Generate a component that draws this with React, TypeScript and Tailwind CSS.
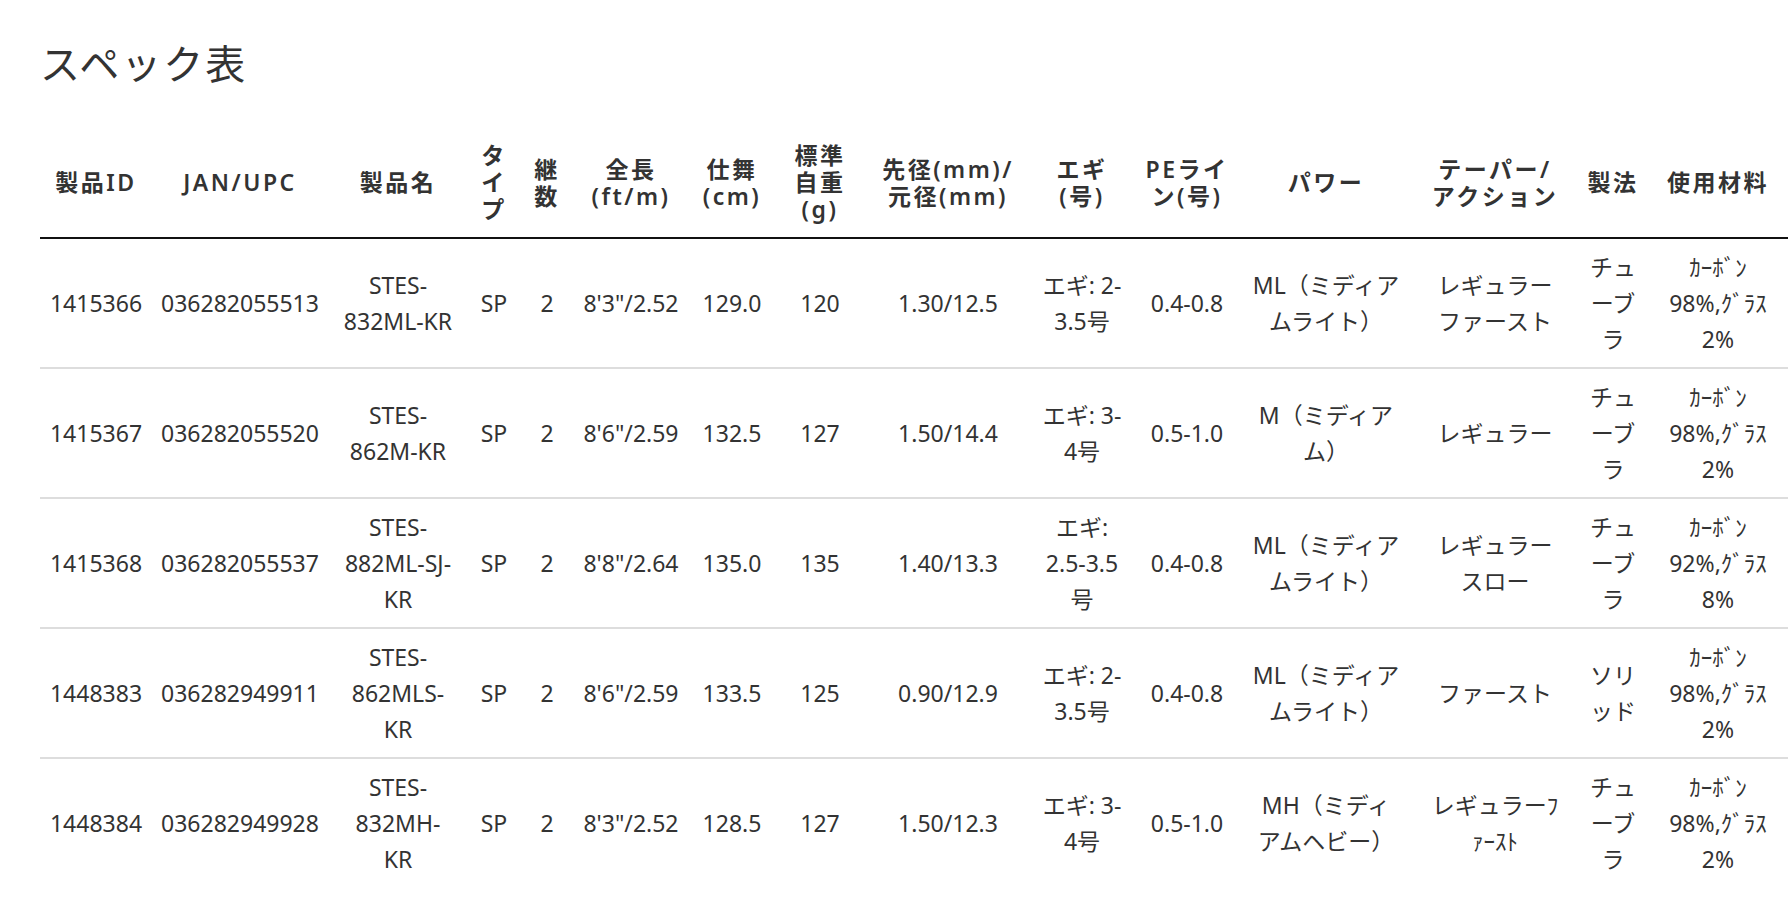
import React from "react"

const headers = [
  "製品ID",
  "JAN/UPC",
  "製品名",
  "タ\nイ\nプ",
  "継\n数",
  "全長\n(ft/m)",
  "仕舞\n(cm)",
  "標準\n自重\n(g)",
  "先径(mm)/\n元径(mm)",
  "エギ\n(号)",
  "PEライ\nン(号)",
  "パワー",
  "テーパー/\nアクション",
  "製法",
  "使用材料",
]

const widths = [
  "w-[112px]",
  "w-[176px]",
  "w-[140px]",
  "w-[52px]",
  "w-[54px]",
  "w-[114px]",
  "w-[88px]",
  "w-[88px]",
  "w-[168px]",
  "w-[100px]",
  "w-[110px]",
  "w-[168px]",
  "w-[170px]",
  "w-[66px]",
  "w-[144px]",
]

const rows = [
  [
    "1415366",
    "036282055513",
    "STES-\n832ML-KR",
    "SP",
    "2",
    "8'3\"/2.52",
    "129.0",
    "120",
    "1.30/12.5",
    "エギ: 2-\n3.5号",
    "0.4-0.8",
    "ML（ミディア\nムライト）",
    "レギュラー\nファースト",
    "チュ\nーブ\nラ",
    "ｶｰﾎﾞﾝ\n98%,ｸﾞﾗｽ\n2%",
  ],
  [
    "1415367",
    "036282055520",
    "STES-\n862M-KR",
    "SP",
    "2",
    "8'6\"/2.59",
    "132.5",
    "127",
    "1.50/14.4",
    "エギ: 3-\n4号",
    "0.5-1.0",
    "M（ミディア\nム）",
    "レギュラー",
    "チュ\nーブ\nラ",
    "ｶｰﾎﾞﾝ\n98%,ｸﾞﾗｽ\n2%",
  ],
  [
    "1415368",
    "036282055537",
    "STES-\n882ML-SJ-\nKR",
    "SP",
    "2",
    "8'8\"/2.64",
    "135.0",
    "135",
    "1.40/13.3",
    "エギ:\n2.5-3.5\n号",
    "0.4-0.8",
    "ML（ミディア\nムライト）",
    "レギュラー\nスロー",
    "チュ\nーブ\nラ",
    "ｶｰﾎﾞﾝ\n92%,ｸﾞﾗｽ\n8%",
  ],
  [
    "1448383",
    "036282949911",
    "STES-\n862MLS-\nKR",
    "SP",
    "2",
    "8'6\"/2.59",
    "133.5",
    "125",
    "0.90/12.9",
    "エギ: 2-\n3.5号",
    "0.4-0.8",
    "ML（ミディア\nムライト）",
    "ファースト",
    "ソリ\nッド",
    "ｶｰﾎﾞﾝ\n98%,ｸﾞﾗｽ\n2%",
  ],
  [
    "1448384",
    "036282949928",
    "STES-\n832MH-\nKR",
    "SP",
    "2",
    "8'3\"/2.52",
    "128.5",
    "127",
    "1.50/12.3",
    "エギ: 3-\n4号",
    "0.5-1.0",
    "MH（ミディ\nアムヘビー）",
    "レギュラーﾌ\nｧｰｽﾄ",
    "チュ\nーブ\nラ",
    "ｶｰﾎﾞﾝ\n98%,ｸﾞﾗｽ\n2%",
  ],
]

export default function App() {
  return (
    <div className="min-h-screen w-full overflow-hidden bg-white pl-[40px] pt-[40px] font-['Noto_Sans','Noto_Sans_CJK_JP',sans-serif] text-[#333]">
      <h2 className="text-[40px] leading-[48px] font-normal tracking-[2px] text-[#333]">スペック表</h2>

      <div className="mt-[40px] overflow-hidden">
        <table className="w-[1750px] table-fixed border-collapse">
          <thead>
            <tr className="border-b-2 border-[#111]">
              {headers.map((h, i) => (
                <th
                  key={i}
                  className={`${widths[i]} whitespace-pre-line px-0 pt-[14px] pb-[14px] text-center align-middle text-[23px] leading-[27px] font-semibold tracking-[2.5px] text-[#333]`}
                >
                  {h}
                </th>
              ))}
            </tr>
          </thead>
          <tbody>
            {rows.map((row, r) => (
              <tr key={r} className="border-b-2 border-[#ddd] last:border-b-0">
                {row.map((cell, c) => (
                  <td
                    key={c}
                    className="whitespace-pre-line px-0 py-[10px] text-center align-middle text-[23px] leading-[36px]"
                  >
                    {cell}
                  </td>
                ))}
              </tr>
            ))}
          </tbody>
        </table>
      </div>
    </div>
  )
}
